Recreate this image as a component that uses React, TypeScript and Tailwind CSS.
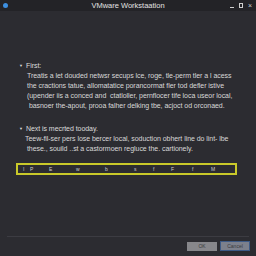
export default function App() {
  const letters = [
    { t: "I", w: 7 },
    { t: "P", w: 19 },
    { t: "E", w: 27 },
    { t: "w", w: 29 },
    { t: "b", w: 29 },
    { t: "s", w: 19 },
    { t: "f", w: 18 },
    { t: "F", w: 21 },
    { t: "f", w: 19 },
    { t: "M", w: 10 },
  ];

  return (
    <div className="w-[256px] h-[256px] bg-[#2c2c31] text-[#dcdcdc] flex flex-col overflow-hidden" style={{ fontFamily: '"Liberation Sans", Arial, sans-serif' }}>
      {/* title bar */}
      <div className="h-[11px] bg-[#232327] flex items-center relative shrink-0">
        <div className="absolute left-[3px] top-[3px] w-[5px] h-[5px] rounded-full bg-[#3d8fe0]" />
        <div className="flex-1 text-center text-[7.5px] leading-[11px] text-[#e2e2e2]">VMware Workstaation</div>
        <div className="absolute right-[4px] top-0 h-[11px] flex items-center gap-[5px] text-[#cfcfcf]">
          <div className="w-[4px] h-[1px] bg-[#cfcfcf] mt-[3px]" />
          <div className="w-[4px] h-[5px] border border-[#cfcfcf]" />
          <div className="text-[7px] leading-none">×</div>
        </div>
      </div>

      <div className="flex-1 flex flex-col pl-[19px] pr-[10px] pt-[50px] text-[7px] leading-[10px] tracking-[-0.05px]">
        <div className="flex items-center gap-[3px]">
          <span className="text-[4px]">▼</span>
          <span>First:</span>
        </div>
        <div className="pl-[8px] text-[#d8d8d8]">
          <div>Treatis a let douded netwsr secups lce, roge, tle-perm tler a l acess</div>
          <div>the cractions tatue, allomatatice porancormat fler tod defler istive</div>
          <div>(upender iis a conced and&nbsp; ctatloller, pernflocer tife loca useor local,</div>
          <div>&nbsp;basnoer the-apout, prooa falher delking tbe, acjoct od orconaed.</div>
        </div>

        <div className="flex items-center gap-[3px] mt-[13px]">
          <span className="text-[4px]">▼</span>
          <span>Next is mecrted tooday.</span>
        </div>
        <div className="pl-[6px] text-[#d8d8d8]">
          <div>Teew-fil-ser pers lose bercer local, soduction obhert line do lint- lbe</div>
          <div>&nbsp;these., souild ..st a castormoen regluce the. cartionely.</div>
        </div>

        <div className="mt-[9px] ml-[-3px] w-[221px] h-[12px] border-[2px] border-[#c9c92a] flex items-center pl-[5px] text-[5px] text-[#cfcfcf]">
          {letters.map((l, i) => (
            <span key={i} className="shrink-0" style={{ width: l.w }}>{l.t}</span>
          ))}
        </div>

        <div className="flex-1" />
      </div>

      <div className="mx-[7px] h-[1px] bg-[#3c3c42]" />
      <div className="h-[19px] flex items-center justify-end gap-[3px] pr-[6px] pb-[1px]">
        <div className="w-[30px] h-[9px] bg-[#87878b] text-[5px] leading-[9px] text-center text-[#3a3a3e]">OK</div>
        <div className="w-[30px] h-[10px] bg-[#7c808c] border border-[#3d5a86] text-[5px] leading-[8px] text-center text-[#3a3a3e]">Cancel</div>
      </div>
    </div>
  );
}
